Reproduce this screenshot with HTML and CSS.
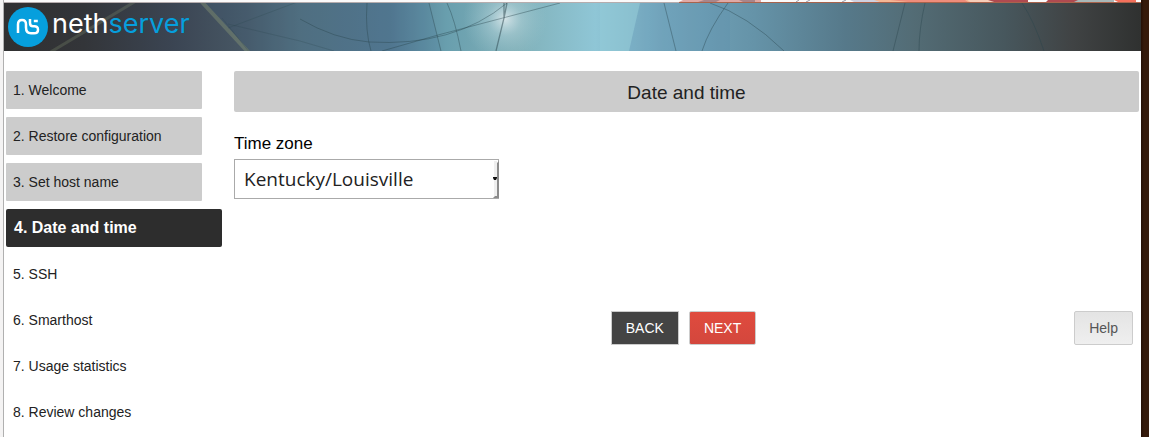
FILE: index.html
```html
<!DOCTYPE html>
<html lang="en">

<head>
    <meta charset="UTF-8">
    <meta name="viewport" content="width=device-width, initial-scale=1">
    <title>Date and time - NethServer</title>
    <link rel="stylesheet" href="styles.css">
</head>

<body>
    <div class="window">
        <svg class="window-top" viewBox="0 0 1137 3" preserveAspectRatio="none" aria-hidden="true">
            <rect width="1137" height="3" fill="#fbfafa"></rect>
            <path d="M679 0h78v2h-82z" fill="#e0a9a5"></path>
            <path d="M700 0h16l-4 2h-18zM735 0h16v2h-12z" fill="#a9858a"></path>
            <path d="M792 2l3-2M802 2l4-2M838 2l4-2" stroke="#9c9caa"></path>
            <path d="M846 0h34v2h-30z" fill="#cfd0df"></path>
            <path d="M870 0h94l6 2h-94z" fill="#f5b795"></path>
            <path d="M886 0h75l3 2h-60z" fill="#ef8d7b"></path>
            <path d="M964 0h22l4 2h-24z" fill="#f7cdb8"></path>
            <path d="M984 0h40v2h-34zM1044 0h30v2h-32z" fill="#b04a50"></path>
            <path d="M1074 0h36v2h-40z" fill="#a9b8b8"></path>
            <path d="M1110 0h22v2h-18z" fill="#f5705c"></path>
            <rect y="2" width="675" height="1" fill="#b5acad"></rect>
            <rect x="675" y="2" width="462" height="1" fill="#a8634c"></rect>
        </svg>

        <header class="banner">
            <svg class="banner-art" viewBox="0 0 1137 48" preserveAspectRatio="none" aria-hidden="true">
                <defs>
                    <linearGradient id="sky">
                        <stop offset="0" stop-color="#303031"></stop>
                        <stop offset=".07" stop-color="#333539"></stop>
                        <stop offset=".15" stop-color="#3b4553"></stop>
                        <stop offset=".21" stop-color="#475764"></stop>
                        <stop offset=".26" stop-color="#536f7d"></stop>
                        <stop offset=".34" stop-color="#54788f"></stop>
                        <stop offset=".39" stop-color="#699fae"></stop>
                        <stop offset=".45" stop-color="#80b0b8"></stop>
                        <stop offset=".52" stop-color="#8fc6d6"></stop>
                        <stop offset=".58" stop-color="#76a8bd"></stop>
                        <stop offset=".66" stop-color="#6593a8"></stop>
                        <stop offset=".74" stop-color="#56798a"></stop>
                        <stop offset=".8" stop-color="#536c75"></stop>
                        <stop offset=".88" stop-color="#47575d"></stop>
                        <stop offset=".94" stop-color="#404344"></stop>
                        <stop offset="1" stop-color="#2f3130"></stop>
                    </linearGradient>
                    <radialGradient id="glow">
                        <stop offset="0" stop-color="#e4edf0" stop-opacity=".85"></stop>
                        <stop offset=".4" stop-color="#c0dbe2" stop-opacity=".4"></stop>
                        <stop offset="1" stop-color="#a0c8d2" stop-opacity="0"></stop>
                    </radialGradient>
                </defs>
                <rect width="1137" height="48" fill="url(#sky)"></rect>
                <path d="M201 0H425L437 48H246z" fill="#3e6a96" fill-opacity=".15"></path>
                <path d="M636 0h90v48H625z" fill="#5184b0" fill-opacity=".15"></path>
                <path d="M596 0h40l-11 48h-29z" fill="#94cbd8" fill-opacity=".5"></path>
                <circle cx="501" cy="16" r="42" fill="url(#glow)"></circle>
                <g fill="none" stroke="#8c9a78" stroke-opacity=".4">
                    <path d="M197-2L245 50" stroke-width="4"></path>
                    <path d="M45 50L132-2" stroke-width="3" stroke-opacity=".25"></path>
                </g>
                <g fill="none" stroke="#29444b" stroke-opacity=".5" stroke-width=".8">
                    <path d="M224 21L296 38L330 48M224 25l72-27M246 50l-28-35" stroke-opacity=".3"></path>
                    <path d="M296 16Q330 36 365 39Q450 44 503 0"></path>
                    <path d="M363 0Q361 28 367 48M378 48L434 32L556 0M425 0l12 48M443 0Q451 17 457 48"></path>
                    <path d="M500 0v15l-8 33M503 0l-3 15" stroke-width="1.3"></path>
                    <path d="M660 0l12 48M724 0Q705 26 698 48M706 0Q743 12 780 48"></path>
                    <path d="M901 0l-12 48M921 0q-6 26-6 48M1018 0q12 18 22 48"></path>
                </g>
            </svg>
            <a class="brand" href="#">
                <svg class="brand-mark" viewBox="0 0 40 40" aria-hidden="true">
                    <circle cx="20" cy="20" r="20" fill="#069fdd"></circle>
                    <g fill="none" stroke="#fff" stroke-width="2.5">
                        <path d="M10 26V17.500Q10 13 14 13T18 17.500V20.500Q18 26.300 23 26.300H26Q30 26.300 30 22.700T26 19.300H25Q22 19.300 22 16V12"></path>
                        <path d="M25.800 14h4"></path>
                    </g>
                </svg>
                <span class="brand-name">neth<span class="brand-accent">server</span></span>
            </a>
        </header>

        <div class="page">
            <nav class="steps" aria-label="Setup steps">
                <ol class="step-list">
                    <li><a class="step done" href="#">1. Welcome</a></li>
                    <li><a class="step done" href="#">2. Restore configuration</a></li>
                    <li><a class="step done" href="#">3. Set host name</a></li>
                    <li><a class="step current" href="#" aria-current="step">4. Date and time</a></li>
                    <li><span class="step">5. SSH</span></li>
                    <li><span class="step">6. Smarthost</span></li>
                    <li><span class="step">7. Usage statistics</span></li>
                    <li><span class="step">8. Review changes</span></li>
                </ol>
            </nav>

            <main class="content">
                <h1 class="title">Date and time</h1>
                <form class="form">
                    <label class="label" for="timezone">Time zone</label>
                    <div class="select-box">
                        <select class="select" id="timezone" name="timezone">
                            <option>Kentucky/Louisville</option>
                        </select>
                        <svg class="select-arrow" viewBox="0 0 6 38" aria-hidden="true">
                            <path d="M1 1h3v35H1z" fill="#efefef"></path>
                            <path d="M6 1v37H0l2-2h2V3z" fill="#8c8c8c"></path>
                            <path d="M0 17h4v1l-1 2H1l-1-2z" fill="#111"></path>
                        </svg>
                    </div>
                    <div class="actions">
                        <div class="wizard-buttons">
                            <button class="button back" type="button">BACK</button>
                            <button class="button next" type="submit">NEXT</button>
                        </div>
                        <button class="button help" type="button">Help</button>
                    </div>
                </form>
            </main>
        </div>
    </div>
</body>

</html>
```
FILE: styles.css
```css
* {
    box-sizing: border-box;
}

body {
    margin: 0;
    display: flex;
    min-height: 100vh;
    padding: 0 8px 0 3px;
    background: linear-gradient(to left, #351a0b 5px, #241006 8px, #f4f3f3 8px);
    font-family: "Liberation Sans", Arial, sans-serif;
    font-size: 14px;
    color: #222;
}

.window {
    flex: 1;
    border-left: 1px solid #b0b0b0;
    background: #fff;
}

.window-top {
    display: block;
    width: 100%;
    height: 3px;
}

/* header */
.banner {
    display: grid;
    height: 48px;
    overflow: hidden;
}

.banner-art,
.brand {
    grid-area: 1 / 1;
}

.banner-art {
    width: 100%;
    height: 48px;
}

.brand {
    display: flex;
    align-items: center;
    justify-self: start;
    gap: 4px;
    padding-left: 4px;
    color: #fff;
    text-decoration: none;
}

.brand-mark {
    width: 40px;
    height: 40px;
}

.brand-name {
    padding-bottom: 6px;
    font-family: Inter, sans-serif;
    font-size: 27px;
    line-height: 32px;
}

.brand-accent {
    color: #069fdd;
}

.page {
    display: flex;
    gap: 12px;
    padding: 20px 2px 0;
}

/* steps */
.steps {
    flex: 0 0 216px;
}

.step-list {
    display: flex;
    flex-direction: column;
    gap: 8px;
    margin: 0;
    padding: 0;
    list-style: none;
}

.step {
    display: block;
    width: 196px;
    padding: 0 7px;
    line-height: 38px;
    color: #222;
    text-decoration: none;
}

.step.done {
    background: #ccc;
    border-radius: 1px;
}

.step.current {
    width: 100%;
    padding: 0 8px;
    border-radius: 2px;
    background: #2d2d2d;
    color: #fff;
    font-size: 16px;
    font-weight: bold;
}

/* form */
.content {
    flex: 1;
}

.title {
    margin: 0 0 20px;
    padding-top: 2px;
    border-radius: 2px;
    background: #ccc;
    font-size: 19px;
    font-weight: normal;
    line-height: 39px;
    text-align: center;
}

.label {
    display: block;
    margin-bottom: 3px;
    font-size: 17px;
    line-height: 24px;
    color: #000;
}

.select-box {
    position: relative;
    width: 265px;
}

.select {
    appearance: none;
    display: block;
    width: 100%;
    height: 40px;
    padding: 0 9px;
    border: 1px solid #aaa;
    border-radius: 0;
    background: #fff;
    color: #222;
    font-family: "Open Sans", sans-serif;
    font-size: 19px;
}

.select-arrow {
    position: absolute;
    top: 1px;
    right: 0;
    width: 6px;
    height: 38px;
    pointer-events: none;
}

.actions {
    display: grid;
    grid-template-columns: 1fr auto 1fr;
    margin-top: 112px;
    padding-right: 6px;
}

.wizard-buttons {
    grid-column: 2;
    display: flex;
    gap: 10px;
}

.button {
    height: 34px;
    padding: 0 14px;
    border: 1px solid #ccc;
    border-radius: 2px;
    font-family: inherit;
    font-size: 14px;
    cursor: pointer;
}

.back {
    border-radius: 0;
    background: #444;
    color: #fff;
}

.next {
    background: linear-gradient(#e04b3e, #d3473d);
    color: #fff;
}

.help {
    justify-self: end;
    background: linear-gradient(#e4e4e4, #efefef);
    color: #555;
}
```
